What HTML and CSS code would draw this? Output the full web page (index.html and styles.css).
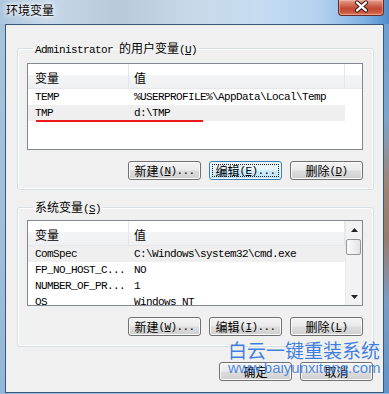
FILE: index.html
```html
<!DOCTYPE html>
<html>
<head>
<meta charset="utf-8">
<link rel="stylesheet" href="styles.css">
</head>
<body>
<div class="win">
  <div class="titlebar">
    <span class="title">环境变量</span>
    <span class="close"><svg width="46" height="16" viewBox="0 0 46 16"><path d="M19.5 3.5 L28.5 11.5 M28.5 3.5 L19.5 11.5" stroke="#3b1710" stroke-width="4.4" stroke-linecap="round"/><path d="M19.5 3.5 L28.5 11.5 M28.5 3.5 L19.5 11.5" stroke="#ffffff" stroke-width="2.4" stroke-linecap="round"/></svg></span>
  </div>
  <div class="mid">
    <div class="client">
      <fieldset class="group g1">
        <legend class="lg">Administrator <span class="cj">的用户变量</span>(<u>U</u>)</legend>
        <div class="list">
          <div class="lmain">
            <div class="lhead"><div class="hc c1"><span class="cj">变量</span></div><div class="hc c2"><span class="cj">值</span></div><div class="hc c3"></div></div>
            <div class="row"><span class="c1">TEMP</span><span class="c2">%USERPROFILE%\AppData\Local\Temp</span></div>
            <div class="row sel"><span class="c1">TMP</span><span class="c2">d:\TMP</span><i class="redline"></i></div>
          </div>
        </div>
        <div class="btns">
          <button class="btn"><span class="cj">新建</span>(<u>N</u>)...</button>
          <button class="btn focus"><span class="fr"><span class="cj">编辑</span>(<u>E</u>)...</span></button>
          <button class="btn"><span class="cj">删除</span>(<u>D</u>)</button>
        </div>
      </fieldset>
      <fieldset class="group g2">
        <legend class="lg"><span class="cj">系统变量</span>(<u>S</u>)</legend>
        <div class="list l2">
          <div class="lmain">
            <div class="lhead"><div class="hc c1"><span class="cj">变量</span></div><div class="hc c2"><span class="cj">值</span></div></div>
            <div class="row sel"><span class="c1">ComSpec</span><span class="c2">C:\Windows\system32\cmd.exe</span></div>
            <div class="row"><span class="c1">FP_NO_HOST_C...</span><span class="c2">NO</span></div>
            <div class="row"><span class="c1">NUMBER_OF_PR...</span><span class="c2">1</span></div>
            <div class="row"><span class="c1">OS</span><span class="c2">Windows_NT</span></div>
          </div>
          <div class="vscroll">
            <div class="sarrow"><svg width="7" height="4" viewBox="0 0 7 4"><path d="M0 4 L3.5 0 L7 4 Z" fill="#222"/></svg></div>
            <div class="thumb"></div>
            <div class="strack"></div>
            <div class="sarrow"><svg width="7" height="4" viewBox="0 0 7 4"><path d="M0 0 L3.5 4 L7 0 Z" fill="#222"/></svg></div>
          </div>
        </div>
        <div class="btns">
          <button class="btn"><span class="cj">新建</span>(<u>W</u>)...</button>
          <button class="btn"><span class="cj">编辑</span>(<u>I</u>)...</button>
          <button class="btn"><span class="cj">删除</span>(<u>L</u>)</button>
        </div>
      </fieldset>
      <div class="okrow">
        <button class="btn"><span class="cj">确定</span></button>
        <button class="btn"><span class="cj">取消</span></button>
      </div>
      <div class="wm">
        <div class="wm1">白云一键重装系统</div>
        <div class="wm2">www.baiyunxitong.com</div>
      </div>
    </div>
    <div class="edge-r"></div>
  </div>
</div>
</body>
</html>
```
FILE: styles.css
```css
* { box-sizing: border-box; }
html, body { margin: 0; padding: 0; }
body {
  width: 389px;
  height: 394px;
  overflow: hidden;
  background: linear-gradient(180deg, #a9c3de 0%, #a2bedb 60%, #94b6da 100%);
}
.win {
  width: 389px;
  height: 394px;
  display: flex;
  flex-direction: column;
}
.titlebar {
  height: 24px;
  flex: none;
  display: flex;
  justify-content: space-between;
  align-items: flex-start;
  padding-left: 6px;
  background: linear-gradient(90deg, #adc6df 0%, #c6d8ea 12%, #b9c9d9 30%, #c9d9e9 50%, #c4dcf2 68%, #b4d2f0 82%, #7fb0e2 94%, #4f8ccb 100%);
}
.title {
  font-family: "Noto Sans CJK SC", sans-serif;
  font-size: 12px;
  line-height: 16px;
  margin-top: 2px;
  color: #000;
  text-shadow: 0 0 5px #fff, 0 0 3px #fff, 0 0 8px rgba(255,255,255,0.9);
}
.close {
  width: 46px;
  height: 16px;
  margin-right: 5px;
  border: 1px solid #6b2a20;
  border-top: none;
  border-radius: 0 0 4px 4px;
  background: linear-gradient(180deg, #e5a396 0%, #d2705c 30%, #c24a35 55%, #c9553c 80%, #dc8060 100%);
  box-shadow: inset 0 0 0 1px rgba(255,200,190,0.45);
  display: flex;
}
.close svg { display: block; margin: -1px 0 0 -1px; }
.mid {
  flex: 1;
  display: flex;
}
.client {
  position: relative;
  width: 379px;
  height: 369px;
  margin-left: 5px;
  border: 1px solid #3a5877;
  background: #f0f0f0;
  padding: 16px 0 0 11px;
  font-family: "Liberation Mono", "Noto Sans CJK SC", monospace;
  font-size: 11px;
  letter-spacing: -0.6px;
  color: #000;
}
.edge-r {
  flex: 1;
  height: 369px;
  background: linear-gradient(180deg, #6c9fd4 0%, #7ea6cc 25%, #a08272 45%, #9a7c6e 58%, #7d9cc2 75%, #5d94cc 100%);
}
.cj {
  font-family: "Noto Sans CJK SC", sans-serif;
  font-size: 12px;
  letter-spacing: 0;
}
u { text-decoration: underline; text-underline-offset: 1px; }

.group {
  width: 357px;
  margin: 0;
  padding: 0 10px 9px 9px;
  border: 1px solid #d5dfe5;
  border-radius: 3px;
  box-shadow: inset 0 0 0 1px #ffffff, 0 0 0 0 transparent;
  min-width: 0;
}
.g2 {
  margin-top: 10px;
  padding-bottom: 10px;
}
.lg {
  margin-left: 6px;
  padding: 0 2px;
  height: 14px;
  line-height: 14px;
  white-space: nowrap;
}
.list {
  width: 336px;
  height: 87px;
  margin-top: 8px;
  border: 1px solid #828790;
  background: #ffffff;
  overflow: hidden;
  display: flex;
}
.l2 {
  margin-top: 6px;
  height: 86px;
}
.lmain {
  flex: 1;
  min-width: 0;
}
.lhead {
  height: 25px;
  display: flex;
  background: linear-gradient(180deg, #ffffff 0%, #ffffff 44%, #f4f5f7 44%, #f0f1f3 100%);
  border-bottom: 1px solid #e6e8eb;
}
.hc {
  height: 24px;
  line-height: 24px;
  padding-top: 2px;
}
.hc.c1 { width: 101px; padding-left: 7px; border-right: 1px solid #e3e6ea; }
.hc.c2 { width: 216px; padding-left: 5px; border-right: 1px solid #e3e6ea; }
.hc.c3 { flex: 1; }
.row {
  position: relative;
  width: 317px;
  height: 16px;
  line-height: 16px;
  display: flex;
  white-space: nowrap;
}
.row .c1 { width: 101px; padding-left: 7px; overflow: hidden; }
.row .c2 { flex: 1; padding-left: 5px; overflow: hidden; }
.row.sel { background: #efefef; }
.redline {
  position: absolute;
  left: 8px;
  top: 15px;
  width: 167px;
  height: 2px;
  background: #f01818;
}
.vscroll {
  width: 17px;
  flex: none;
  display: flex;
  flex-direction: column;
  background: #f2f2f2;
  border-left: 1px solid #e9e9e9;
}
.sarrow {
  height: 17px;
  flex: none;
  display: flex;
  align-items: center;
  justify-content: center;
}
.thumb {
  height: 16px;
  margin: 1px 1px 0 0;
  flex: none;
  border: 1px solid #979797;
  border-radius: 2px;
  background: linear-gradient(90deg, #fbfbfb 0%, #f0f0f0 50%, #e2e2e2 100%);
}
.strack { flex: 1; }

.btns {
  display: flex;
  justify-content: flex-end;
  gap: 8px;
  margin-top: 11px;
}
.btn {
  width: 73px;
  height: 19px;
  padding: 0;
  margin: 0;
  border: 1px solid #707070;
  border-radius: 3px;
  background: linear-gradient(180deg, #f3f3f3 0%, #ebebeb 48%, #dddddd 52%, #cfcfcf 100%);
  box-shadow: inset 0 0 0 1px #fbfbfb;
  font: inherit;
  letter-spacing: inherit;
  color: #000;
  line-height: 16px;
  display: flex;
  align-items: center;
  justify-content: center;
  white-space: nowrap;
}
.btn.focus {
  border-color: #3c7fb1;
  background: linear-gradient(180deg, #f4fafe 0%, #e3f3fd 48%, #cdebfc 52%, #bfe5fb 100%);
  box-shadow: inset 0 0 0 1px #e6f4fd;
  padding: 2px;
}
.fr {
  flex: 1;
  align-self: stretch;
  border: 1px dotted #1a1a1a;
  display: flex;
  align-items: center;
  justify-content: center;
}
.okrow {
  width: 357px;
  display: flex;
  justify-content: flex-end;
  gap: 8px;
  padding-right: 1px;
  margin-top: 15px;
}
.wm {
  position: absolute;
  left: 222px;
  top: 315px;
  letter-spacing: 0;
  pointer-events: none;
}
.wm1 {
  font-family: "Noto Sans CJK SC", sans-serif;
  font-size: 19px;
  line-height: 20px;
  color: rgba(38, 110, 220, 0.88);
  white-space: nowrap;
}
.wm2 {
  font-family: "Liberation Sans", Arial, sans-serif;
  font-size: 15px;
  line-height: 15px;
  margin-top: 0px;
  color: rgba(48, 116, 222, 0.85);
  white-space: nowrap;
}
```
